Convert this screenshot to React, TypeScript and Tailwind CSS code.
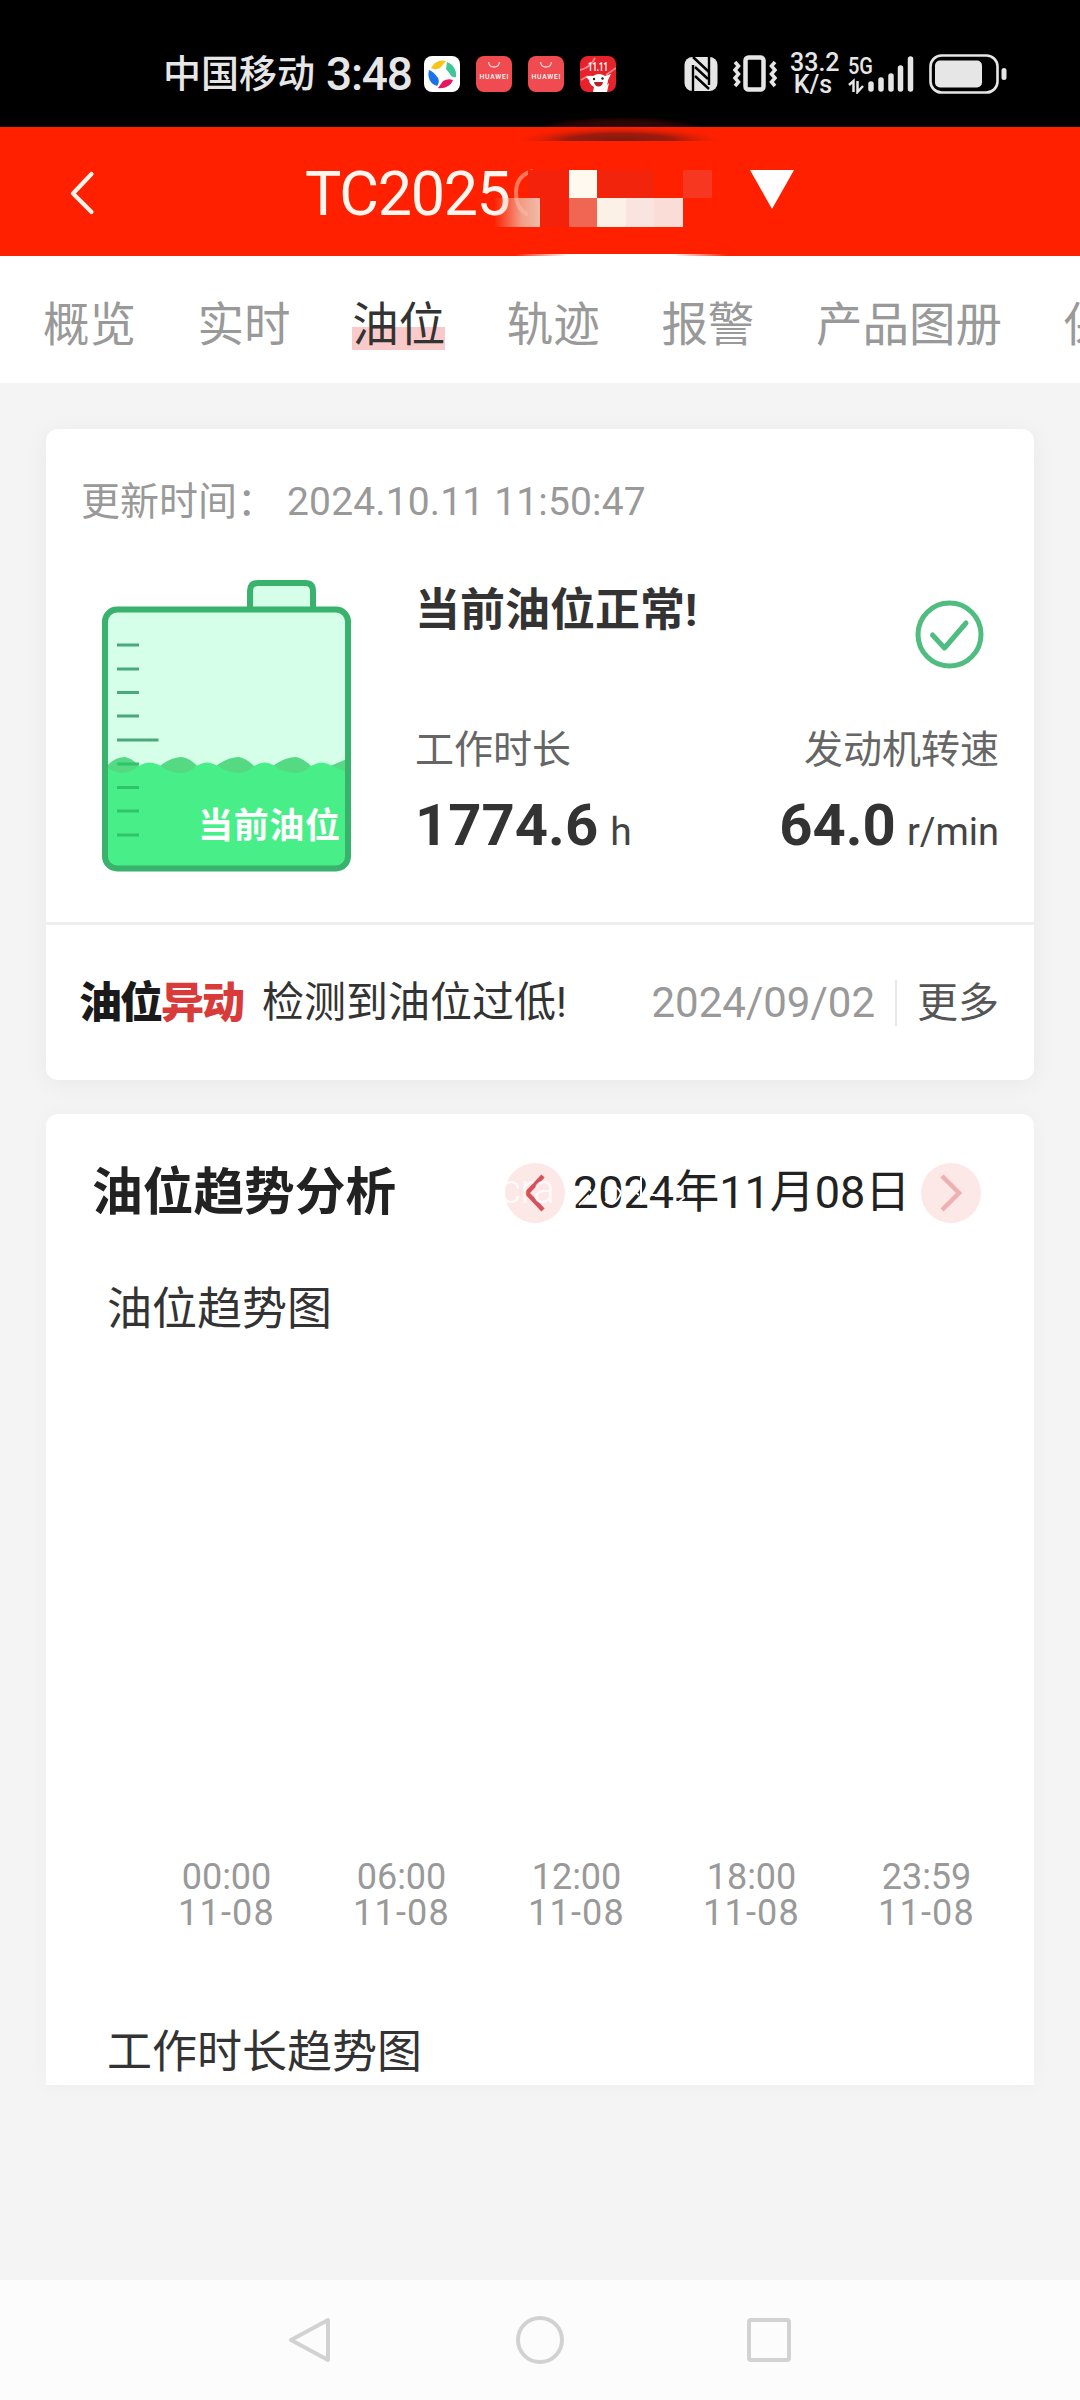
import React from 'react';

const FONT = "font-[Roboto,'Noto_Sans_CJK_SC',sans-serif]";

const tabs = ['概览', '实时', '油位', '轨迹', '报警', '产品图册', '保养'];

const axisLabels = ['00:00', '06:00', '12:00', '18:00', '23:59'];

const SwirlIcon = () => (
  <svg width="36" height="36" viewBox="0 0 36 36">
    <rect width="36" height="36" rx="8" fill="#fff" />
    <path d="M7 12 C10 6 16 3 22 5 L17 11 Q13 15 7 12Z" fill="#f5c518" />
    <path d="M23 6 C29 8 33 14 32 21 Q28 22 26 18 L22 13Z" fill="#3fc79a" />
    <path d="M29 24 C27 30 20 33 14 32 L19 25 Q24 22 29 24Z" fill="#e8175d" />
    <path d="M13 30 C6 28 3 21 5 14 Q9 15 14 22 Q16 26 13 30Z" fill="#1a73e8" />
  </svg>
);

const HuaweiIcon = () => (
  <svg width="36" height="36" viewBox="0 0 36 36">
    <rect width="36" height="36" rx="8" fill="#ef4b50" />
    <path d="M12.500 6 Q13 11 18 11 Q23 11 23.500 6" fill="none" stroke="#fbd5d5" strokeWidth="1.300" />
    <text x="18" y="23" textAnchor="middle" fontSize="6.800" fontWeight="500" fill="#fff" fontFamily="Roboto" textLength="29">HUAWEI</text>
  </svg>
);

const PromoIcon = () => (
  <svg width="36" height="36" viewBox="0 0 36 36">
    <rect width="36" height="36" rx="8" fill="#e6232a" />
    <path d="M0 14 Q10 12 15 2 M36 12 L26 19 M1 24 L8 20" stroke="#f9808a" strokeWidth="1.800" fill="none" />
    <text x="18" y="15" textAnchor="middle" fontSize="12" fontWeight="700" fill="#fff" fontFamily="Roboto" textLength="20" lengthAdjust="spacingAndGlyphs">11.11</text>
    <path d="M6 21 Q10 19 13 20 Q19 16 25 20 L31 18 L28 24 Q28 29 25 31 L29 27 L27 36 H13 L14 31 Q9 28 9 24Z" fill="#fff" />
    <circle cx="14" cy="23" r="1.200" fill="#222" />
    <circle cx="22.500" cy="22.500" r="1.200" fill="#222" />
    <path d="M14 26 H23 Q22 30.500 18.500 30.500 Q15 30.500 14 26Z" fill="#b3202a" />
  </svg>
);

const StatusBar = () => (
  <div className="flex h-[127px] shrink-0 items-center bg-black pl-[163px] pt-[21px] text-[#e6e6e6]">
    <span className="w-[163px] text-[38px] font-medium leading-none">中国移动</span>
    <span className="w-[98px] text-[46px] font-medium leading-none tracking-[-1.2px]">3:48</span>
    <div className="flex w-[260px] gap-4">
      <SwirlIcon />
      <HuaweiIcon />
      <HuaweiIcon />
      <PromoIcon />
    </div>
    {/* NFC */}
    <svg className="mr-[13px]" width="35" height="36" viewBox="0 0 35 36">
      <rect x="0.500" y="1" width="33" height="34" rx="8" fill="#e6e6e6" />
      <path d="M9 35 V9 M25 1 V29" fill="none" stroke="#000" strokeWidth="2.400" />
      <path d="M9 1 L25 16 M11 11 L24 23 M11 20 L25 33" stroke="#000" strokeWidth="2.400" />
    </svg>
    {/* Vibrate */}
    <svg className="mr-3" width="46" height="38" viewBox="0 0 46 38">
      <rect x="13.500" y="2.500" width="18" height="32" rx="3" fill="none" stroke="#e6e6e6" strokeWidth="4.500" />
      <path d="M3 7 L6.500 11 L3 15 L6.500 19 L3 23 L6.500 27 L3 31 M43 7 L39.500 11 L43 15 L39.500 19 L43 23 L39.500 27 L43 31" fill="none" stroke="#e6e6e6" strokeWidth="3.500" />
    </svg>
    <div className="mr-3 w-[46px] text-center text-[25px] font-medium leading-[22px]">
      <div>33.2</div>
      <div>K/s</div>
    </div>
    {/* Signal */}
    <svg className="mr-3.5" width="67" height="40" viewBox="0 0 67 40">
      <text x="0" y="19.500" fontSize="24" fontWeight="500" fill="#e6e6e6" fontFamily="Roboto" textLength="25" lengthAdjust="spacingAndGlyphs">5G</text>
      <path d="M1 31 L5.500 27 V38 M9.500 27 V38 L15 32" fill="none" stroke="#e6e6e6" strokeWidth="2.500" />
      <path d="M23 30 V35 M33 26 V35 M43 22 V35 M52.500 14 V35 M62.500 5 V35" stroke="#e6e6e6" strokeWidth="5.500" strokeLinecap="round" />
    </svg>
    {/* Battery */}
    <svg width="78" height="40" viewBox="0 0 78 40">
      <rect x="1.500" y="1.500" width="67" height="37" rx="11" fill="none" stroke="#e6e6e6" strokeWidth="2.600" />
      <rect x="6" y="6.500" width="47" height="27" rx="5" fill="#e6e6e6" />
      <rect x="72.500" y="14" width="5" height="12" rx="2.500" fill="#e6e6e6" />
    </svg>
  </div>
);

const Header = () => (
  <div className="relative flex h-[129px] shrink-0 items-center bg-[#ff2000]">
    <svg className="ml-[70px] mt-0.5" width="25" height="44" viewBox="0 0 25 44">
      <path d="M21.500 3 L3 22.500 L21.500 41" fill="none" stroke="#fff3ea" strokeWidth="4.200" strokeLinecap="round" strokeLinejoin="round" />
    </svg>
    <span className="ml-[210px] w-[209px] pt-[5px] text-[61px] leading-none tracking-[-1.3px] text-[#fff6f0]">TC2025</span>
    <svg className="mb-1 ml-[236px]" width="44" height="39" viewBox="0 0 44 39">
      <path d="M0 0 H44 L22 39Z" fill="#fff" />
    </svg>
    {/* Pixelated part of the device number */}
    <svg className="absolute left-[480px] top-[-10px]" width="270" height="144" viewBox="0 0 270 144">
      <defs>
        <linearGradient id="fade" x1="0" x2="1">
          <stop offset="0" stopColor="#f0bca8" stopOpacity="0" />
          <stop offset="0.600" stopColor="#f0bca8" stopOpacity="0.800" />
          <stop offset="1" stopColor="#f0bca8" />
        </linearGradient>
        <radialGradient id="shade" cx="0.500" cy="1" r="0.500" gradientTransform="translate(0 -1) scale(1 2)">
          <stop offset="0" stopColor="#7c1a10" />
          <stop offset="0.500" stopColor="#8c1a10" stopOpacity="0.850" />
          <stop offset="1" stopColor="#ff2000" stopOpacity="0" />
        </radialGradient>
        <linearGradient id="edge" x1="0" x2="1">
          <stop offset="0" stopColor="#fff" stopOpacity="0" />
          <stop offset="0.250" stopColor="#fff" />
          <stop offset="0.750" stopColor="#fff" />
          <stop offset="1" stopColor="#fff" stopOpacity="0" />
        </linearGradient>
      </defs>
      <rect x="60" y="0" width="162" height="10" fill="url(#shade)" opacity="0.350" />
      <rect x="30" y="9" width="220" height="15" fill="url(#shade)" />
      <path d="M53 54 Q36 58 36 76 Q36 92 48 98" fill="none" stroke="#ff7a5c" strokeWidth="4" />
      <rect x="48" y="53" width="41" height="57" fill="#f5220b" />
      <rect x="14" y="81" width="46" height="29" fill="url(#fade)" />
      <rect x="89" y="53" width="28" height="28" fill="#fff9f0" />
      <rect x="117" y="53" width="57" height="28" fill="#f3240c" />
      <rect x="203" y="53" width="29" height="28" fill="#f7371f" />
      <rect x="89" y="81" width="28" height="29" fill="#ef6653" />
      <rect x="117" y="81" width="29" height="29" fill="#fcf1e6" />
      <rect x="146" y="81" width="28" height="29" fill="#f9e4df" />
      <rect x="174" y="81" width="29" height="29" fill="#fbddd8" />
      <rect x="35" y="137" width="212" height="2" fill="url(#edge)" />
    </svg>
  </div>
);

const TabBar = () => (
  <div className="flex h-[127px] shrink-0 gap-[61.6px] overflow-hidden bg-white pl-[43px] pt-[33px] text-[46.5px] leading-[73px] text-[#999]">
    {tabs.map(tab => (
      <div
        key={tab}
        className={tab === '油位' ? 'h-[61px] shrink-0 bg-linear-to-b from-transparent from-[62%] to-[#f9caca] to-[62%] text-[#333]' : 'h-[61px] shrink-0'}
      >
        {tab}
      </div>
    ))}
  </div>
);

const Tank = () => (
  <svg className="ml-[20px] mt-[-1px] shrink-0" width="251" height="293" viewBox="0 0 251 293">
    <path d="M149 30 V12 Q149 4 157 4 H204 Q212 4 212 12 V30" fill="#d6ffe9" stroke="#38b26c" strokeWidth="6" />
    <rect x="4" y="30.500" width="243" height="259" rx="12" fill="#d6ffe9" />
    <path d="M6 187 Q14 178 24 178 Q32 180 38 187 L59 187 Q70 178 81 178 Q90 180 96 187 L115 187 Q127 178 138 178 Q146 180 153 187 L172 187 Q184 178 195 178 Q203 180 210 187 L229 187 L246 180 V200 H6Z" fill="#55d982" />
    <path d="M4 186 Q12 194 22 194 Q29 194 38 187 Q48 180 60 187 Q68 194 80 194 Q88 194 95 187 Q106 180 117 187 Q126 194 138 194 Q146 194 153 187 Q164 180 174 187 Q183 194 195 194 Q203 194 210 187 Q221 180 231 187 L246 193 V280 Q246 289 238 289 H14 Q4 289 4 280Z" fill="#48ef88" />
    <g stroke="#4ba878" strokeWidth="3">
      <path d="M16 66 H38 M16 90 H38 M16 113.500 H38 M16 137 H38 M16 161 H57.500" />
      <path d="M16 185 H38 M16 208.500 H38 M16 232 H38 M16 256 H38" stroke="#2fc46c" />
    </g>
    <rect x="4" y="30.500" width="243" height="259" rx="12" fill="none" stroke="#38b26c" strokeWidth="6" />
    <text x="97" y="259" fontSize="35" fontWeight="700" fill="#fff" fontFamily="'Noto Sans CJK SC', sans-serif" textLength="142">当前油位</text>
  </svg>
);

const StatusCard = () => (
  <div className="flex h-[651px] shrink-0 flex-col rounded-xl bg-white shadow-[0_4px_24px_rgba(0,0,0,0.05)]">
    <div className="flex h-[151px] pl-[35px] pt-[43px] text-[39px] leading-[60px] text-[#999]">
      <span className="w-[206px]">更新时间：</span>
      <span className="tracking-[0.15px]">2024.10.11 11:50:47</span>
    </div>
    <div className="flex h-[342px] px-[35px]">
      <Tank />
      <div className="ml-[63px] grow">
        <div className="flex h-[141px] justify-between">
          <h2 className="pt-1 text-[45px] font-bold leading-[54px] text-[#333]">当前油位正常!</h2>
          <svg className="mr-[15px] mt-5" width="69" height="69" viewBox="0 0 69 69">
            <circle cx="34.500" cy="34.500" r="31.500" fill="none" stroke="#4fbd80" strokeWidth="5" />
            <path d="M17.500 35 L29.500 48 L51 23" fill="none" stroke="#4fbd80" strokeWidth="5" strokeLinecap="round" strokeLinejoin="round" />
          </svg>
        </div>
        <div className="flex justify-between text-[39px] leading-[58px] text-[#666]">
          <span>工作时长</span>
          <span>发动机转速</span>
        </div>
        <div className="mt-[11px] flex items-baseline justify-between leading-[70px] text-[#333]">
          <div className="flex items-baseline gap-3">
            <span className="text-[58px] font-bold">1774.6</span>
            <span className="text-[39px] text-[#444]">h</span>
          </div>
          <div className="flex items-baseline gap-[11px]">
            <span className="text-[58px] font-bold">64.0</span>
            <span className="text-[38px] text-[#444]">r/min</span>
          </div>
        </div>
      </div>
    </div>
    <div className="flex grow items-center border-t-[3px] border-[#eee] pl-[33px] pr-[35px] pt-px">
      <span className="w-[183px] text-[43px] font-black leading-none tracking-[-2px] text-[#1a1a1a]">
        油位<span className="text-[#d93a3a]">异动</span>
      </span>
      <span className="text-[42px] leading-none text-[#333]">检测到油位过低!</span>
      <span className="ml-auto text-[42px] leading-none text-[#999]">2024/09/02</span>
      <span className="ml-5 mr-[20px] h-[46px] w-0.5 bg-[#e8e8e8]" />
      <span className="text-[41px] leading-none text-[#555]">更多</span>
    </div>
  </div>
);

const TrendCard = () => (
  <div className="mt-[34px] flex h-[971px] shrink-0 flex-col rounded-t-xl bg-white text-[#333] shadow-[0_0_20px_rgba(0,0,0,0.03)]">
    <div className="flex h-[120px] items-center pl-[46px] pt-[37px]">
      <h2 className="w-[413px] text-[50.7px] font-bold leading-[84px] text-[#222]">油位趋势分析</h2>
      <div className="relative flex items-center">
        <svg width="60" height="60" viewBox="0 0 60 60">
          <circle cx="30" cy="30" r="30" fill="#fde8e8" />
          <path d="M38 13 L22 30 L38 47" fill="none" stroke="#d5525a" strokeWidth="4.500" />
        </svg>
        <span className="w-[356px] pl-2 text-[45px] leading-none text-[#222]">2024年11月08日</span>
        <svg width="60" height="60" viewBox="0 0 60 60">
          <circle cx="30" cy="30" r="30" fill="#fde8e8" />
          <path d="M21 13 L38 30 L21 47" fill="none" stroke="#eeb0b0" strokeWidth="4.500" />
        </svg>
        {/* White watermark running over the date */}
        <span className="absolute left-[-5px] top-[7px] text-[40px] font-light leading-none text-white/80">cra</span>
        <svg className="absolute left-[66px] top-[8px]" width="124" height="44" viewBox="0 0 124 44">
          <path d="M4 20 Q14 10 20 20 M8 34 L18 24 M28 10 V38 M34 20 Q44 10 50 22 Q44 38 34 30 M58 16 L68 24 M70 6 V34 M78 24 H92 M98 18 Q106 10 112 20 M104 34 L114 26" fill="none" stroke="#fff" strokeWidth="2" />
        </svg>
      </div>
    </div>
    <div className="mt-[46px] pl-[61px] text-[45px] leading-[60px]">油位趋势图</div>
    <div className="mt-auto flex pl-[93px] text-center text-[36px] leading-[36px] text-[#999]">
      {axisLabels.map(label => (
        <div key={label} className="w-[175px]">
          <div>{label}</div>
          <div className="tracking-[1.2px]">11-08</div>
        </div>
      ))}
    </div>
    <div className="mb-[2px] mt-[92px] pl-[61px] text-[45px] leading-[60px]">工作时长趋势图</div>
  </div>
);

const NavBar = () => (
  <div className="mt-auto flex h-[120px] shrink-0 items-center justify-center gap-[182px] bg-[#fcfcfc]">
    <svg width="50" height="50" viewBox="0 0 50 50">
      <path d="M45 5 V45 L8 25Z" fill="none" stroke="#d2d2d2" strokeWidth="4" strokeLinejoin="round" />
    </svg>
    <svg width="50" height="50" viewBox="0 0 50 50">
      <circle cx="25" cy="25" r="22" fill="none" stroke="#d2d2d2" strokeWidth="4" />
    </svg>
    <svg width="50" height="50" viewBox="0 0 50 50">
      <rect x="2" y="5" width="40" height="40" rx="2" fill="none" stroke="#d2d2d2" strokeWidth="4" />
    </svg>
  </div>
);

const App: React.FC = () => {
  return (
    <div className={`flex h-[2400px] w-[1080px] flex-col overflow-hidden bg-[#f4f4f4] whitespace-nowrap ${FONT}`}>
      <StatusBar />
      <Header />
      <TabBar />
      <div className="px-[46px] pt-[46px]">
        <StatusCard />
        <TrendCard />
      </div>
      <NavBar />
    </div>
  );
};

export default App;
